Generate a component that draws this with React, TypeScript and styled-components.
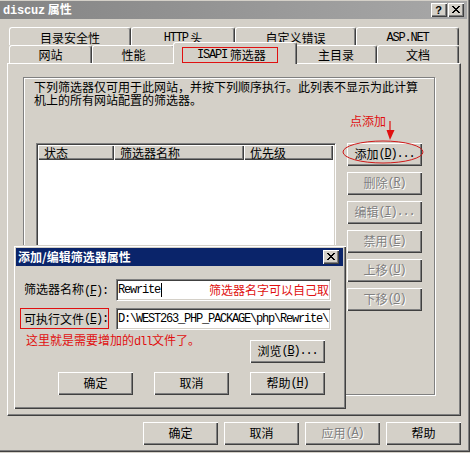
import React from "react";
import styled, { createGlobalStyle, css } from "styled-components";

const GlobalStyle = createGlobalStyle`
  html, body { margin: 0; padding: 0; background: #d4d0c8; }
  body {
    font-family: "Noto Sans CJK SC", "Noto Sans", sans-serif;
    font-size: 12px;
    color: #000;
  }
  * { box-sizing: border-box; }
`;

const Mono = styled.span<{ $bold?: boolean }>`
  font-family: "Liberation Mono", "DejaVu Sans Mono", monospace;
  font-weight: ${(p) => (p.$bold ? 700 : 400)};
  letter-spacing: ${(p) => (p.$bold ? "-0.2px" : "-1.2px")};
`;

const Window = styled.div`
  position: relative;
  width: 470px;
  height: 452px;
  background: #d4d0c8;
  padding: 1px 3px 0 0;
  box-shadow: inset -1px -1px #404040, inset -2px -2px #808080;
  display: flex;
  flex-direction: column;
  overflow: hidden;
`;

const TitleBar = styled.div<{ $active?: boolean }>`
  height: 18px;
  flex: none;
  display: flex;
  align-items: center;
  padding: 0 ${(p) => (p.$active ? 4 : 3)}px 0 ${(p) => (p.$active ? 2 : 3)}px;
  background: ${(p) =>
    p.$active ? "#0a246a" : "linear-gradient(to right, #848484, #a8a8a8)"};
`;

const TitleText = styled.div`
  flex: 1;
  color: #fff;
  font-weight: 700;
  font-size: 12px;
  line-height: 18px;
  white-space: nowrap;
`;

const CaptionButtons = styled.div`
  display: flex;
  gap: 1px;
`;

const CaptionButton = styled.div`
  width: 16px;
  height: 14px;
  background: #d4d0c8;
  box-shadow: inset 1px 1px #fff, inset -1px -1px #404040, inset -2px -2px #808080;
  display: flex;
  align-items: center;
  justify-content: center;
  font: 700 11px "Liberation Sans", sans-serif;
  color: #000;
  padding: 0 1px 1px 0;
`;

const TabControl = styled.div`
  margin: 8px 0 0 7px;
  width: 454px;
  display: flex;
  flex-direction: column;
`;

const TabRow = styled.div`
  display: flex;
  align-items: flex-start;
  padding: 0 2px;
  height: 18px;
`;

const Tab = styled.div<{ $w: number; $selected?: boolean; $top?: boolean }>`
  width: ${(p) => p.$w}px;
  flex: none;
  height: 18px;
  background: #d4d0c8;
  border-top: 1px solid #fff;
  border-left: 1px solid #fff;
  border-right: 1px solid #404040;
  box-shadow: inset -1px 0 #808080;
  border-radius: 3px 3px 0 0;
  display: flex;
  align-items: center;
  justify-content: center;
  line-height: 12px;
  white-space: nowrap;
  padding-top: ${(p) => (p.$top ? 2 : 0)}px;
  ${(p) =>
    p.$selected &&
    css`
      width: ${p.$w + 4}px;
      height: 22px;
      margin: -3px -2px 0;
      z-index: 1;
      align-items: flex-start;
      justify-content: flex-start;
      padding: 4px 0 0 8px;
    `}
`;

const FocusMark = styled.span`
  width: 96px;
  height: 16px;
  border: 1px solid #e01010;
  display: flex;
  align-items: center;
  padding-left: 14px;
  line-height: 12px;
`;

const Panel = styled.div`
  height: 353px;
  background: #d4d0c8;
  border-top: 1px solid #fff;
  border-left: 1px solid #fff;
  border-right: 1px solid #404040;
  border-bottom: 1px solid #404040;
  box-shadow: inset -1px -1px #808080;
  padding: 13px 25px 0 15px;
`;

const GroupBox = styled.div`
  height: 318px;
  border: 1px solid #808080;
  box-shadow: inset 1px 1px #fff, 1px 1px #fff;
  padding: 2px 12px 0 10px;
`;

const Description = styled.p`
  margin: 0;
  line-height: 13px;
  white-space: nowrap;
`;

const ListArea = styled.div`
  display: flex;
  align-items: flex-start;
  margin: 37px 0 0 2px;
`;

const ListView = styled.div`
  width: 300px;
  height: 242px;
  flex: none;
  background: #fff;
  border-top: 1px solid #808080;
  border-left: 1px solid #808080;
  border-right: 1px solid #fff;
  border-bottom: 1px solid #fff;
  box-shadow: inset 1px 1px #404040, inset -1px -1px #d4d0c8;
  padding: 1px;
`;

const ListHeader = styled.div`
  display: flex;
  height: 15px;
`;

const HeaderCell = styled.div<{ $w: number }>`
  width: ${(p) => p.$w}px;
  flex: none;
  background: #d4d0c8;
  box-shadow: inset 1px 1px #fff, inset -1px -1px #404040, inset -2px -2px #808080;
  padding-left: 6px;
  line-height: 15px;
  white-space: nowrap;
`;

const SideButtons = styled.div`
  display: flex;
  flex-direction: column;
  gap: 6px;
  margin-left: 11px;
`;

const Button = styled.button<{ $disabled?: boolean }>`
  width: 75px;
  height: 23px;
  flex: none;
  border: none;
  margin: 0;
  padding: 0 0 1px;
  background: #d4d0c8;
  box-shadow: inset 1px 1px #fff, inset -1px -1px #404040, inset -2px -2px #808080;
  display: flex;
  align-items: center;
  justify-content: center;
  font-family: inherit;
  font-size: 12px;
  line-height: 12px;
  white-space: nowrap;
  color: ${(p) => (p.$disabled ? "#808080" : "#000")};
  text-shadow: ${(p) => (p.$disabled ? "1px 1px 0 #fff" : "none")};
`;

const BottomBar = styled.div`
  display: flex;
  justify-content: flex-end;
  gap: 6px;
  margin-top: 6px;
  padding-right: 6px;
`;

const Dialog = styled.div`
  position: absolute;
  left: 13px;
  top: 245px;
  width: 333px;
  height: 164px;
  background: #d4d0c8;
  padding: 3px;
  box-shadow: inset 1px 1px #d4d0c8, inset 2px 2px #fff, inset -1px -1px #404040,
    inset -2px -2px #808080;
  z-index: 2;
`;

const DialogBody = styled.div`
  padding: 13px 12px 0 8px;
  display: flex;
  flex-direction: column;
`;

const FormRow = styled.div<{ $gap?: number }>`
  display: grid;
  grid-template-columns: 92px 215px;
  align-items: center;
  height: 22px;
  margin-top: ${(p) => p.$gap ?? 0}px;
`;

const FieldLabel = styled.label<{ $boxed?: boolean }>`
  line-height: 12px;
  white-space: nowrap;
  ${(p) =>
    p.$boxed &&
    css`
      align-self: start;
      justify-self: start;
      margin-left: -4px;
      width: 89px;
      height: 21px;
      border: 1px solid #e01010;
      padding-left: 3px;
      display: flex;
      align-items: center;
    `}
`;

const TextBox = styled.div`
  height: 22px;
  background: #fff;
  border-top: 1px solid #808080;
  border-left: 1px solid #808080;
  border-right: 1px solid #fff;
  border-bottom: 1px solid #fff;
  box-shadow: inset 1px 1px #404040, inset -1px -1px #d4d0c8;
  display: flex;
  align-items: center;
  padding: 0 1px 0 1px;
  overflow: hidden;
  white-space: nowrap;
  line-height: 12px;
`;

const Caret = styled.span`
  display: inline-block;
  width: 1px;
  height: 14px;
  background: #000;
  margin-left: 1px;
`;

const RedNote = styled.span<{ $push?: boolean }>`
  color: #e01010;
  line-height: 12px;
  white-space: nowrap;
  margin-left: ${(p) => (p.$push ? "auto" : "2px")};
`;

const NoteRow = styled.div`
  display: flex;
  justify-content: space-between;
  align-items: flex-start;
  padding-right: 6px;
  margin-top: 4px;
`;

const BrowseButton = styled(Button)`
  margin-top: 6px;
`;

const DialogButtons = styled.div`
  display: flex;
  justify-content: flex-end;
  gap: 21px;
  padding-right: 6px;
  margin-top: 9px;
`;

const Annotation = styled.span`
  position: absolute;
  left: 350px;
  top: 115px;
  color: #e01010;
  line-height: 12px;
  white-space: nowrap;
`;

const AnnotationMarks = styled.svg`
  position: absolute;
  left: 340px;
  top: 118px;
  width: 90px;
  height: 50px;
  pointer-events: none;
`;

const CloseGlyph = () => (
  <svg width="8" height="7" viewBox="0 0 8 7" shapeRendering="crispEdges">
    <path
      fill="#000"
      d="M0 0h2v1h-2z M6 0h2v1h-2z M1 1h2v1h-2z M5 1h2v1h-2z M2 2h4v1h-4z M3 3h2v1h-2z M2 4h4v1h-4z M1 5h2v1h-2z M5 5h2v1h-2z M0 6h2v1h-2z M6 6h2v1h-2z"
    />
  </svg>
);

const Mn = ({ k, tail = "" }: { k: string; tail?: string }) => (
  <Mono>
    (<u>{k}</u>){tail}
  </Mono>
);

export default function App() {
  return (
    <>
      <GlobalStyle />
      <Window>
        <TitleBar>
          <TitleText>
            <Mono $bold>discuz</Mono> 属性
          </TitleText>
          <CaptionButtons>
            <CaptionButton>?</CaptionButton>
            <CaptionButton>
              <CloseGlyph />
            </CaptionButton>
          </CaptionButtons>
        </TitleBar>

        <TabControl>
          <TabRow>
            <Tab $w={122} $top>目录安全性</Tab>
            <Tab $w={104} $top>
              <Mono>HTTP</Mono>&nbsp;头
            </Tab>
            <Tab $w={121} $top>自定义错误</Tab>
            <Tab $w={103} $top>
              <Mono>ASP.NET</Mono>
            </Tab>
          </TabRow>
          <TabRow>
            <Tab $w={83}>网站</Tab>
            <Tab $w={83}>性能</Tab>
            <Tab $w={120} $selected>
              <FocusMark>
                <Mono>ISAPI</Mono>&nbsp;筛选器
              </FocusMark>
            </Tab>
            <Tab $w={82}>主目录</Tab>
            <Tab $w={82}>文档</Tab>
          </TabRow>
          <Panel>
            <GroupBox>
              <Description>
                下列筛选器仅可用于此网站，并按下列顺序执行。此列表不显示为此计算
                <br />
                机上的所有网站配置的筛选器。
              </Description>
              <ListArea>
                <ListView>
                  <ListHeader>
                    <HeaderCell $w={76}>状态</HeaderCell>
                    <HeaderCell $w={130}>筛选器名称</HeaderCell>
                    <HeaderCell $w={89}>优先级</HeaderCell>
                  </ListHeader>
                </ListView>
                <SideButtons>
                  <Button>
                    添加<Mn k="D" tail="..." />
                  </Button>
                  <Button $disabled>
                    删除<Mn k="R" />
                  </Button>
                  <Button $disabled>
                    编辑<Mn k="I" tail="..." />
                  </Button>
                  <Button $disabled>
                    禁用<Mn k="E" />
                  </Button>
                  <Button $disabled>
                    上移<Mn k="U" />
                  </Button>
                  <Button $disabled>
                    下移<Mn k="O" />
                  </Button>
                </SideButtons>
              </ListArea>
            </GroupBox>
          </Panel>
        </TabControl>

        <BottomBar>
          <Button>确定</Button>
          <Button>取消</Button>
          <Button $disabled>
            应用<Mn k="A" />
          </Button>
          <Button>帮助</Button>
        </BottomBar>

        <Annotation>点添加</Annotation>
        <AnnotationMarks viewBox="0 0 90 50">
          <line x1="50" y1="3" x2="50" y2="13" stroke="#e01010" strokeWidth="1.2" />
          <polygon points="46.5,12 54.5,12 50,22" fill="#e01010" />
          <ellipse cx="43" cy="34" rx="40" ry="11" fill="none" stroke="#d01818" strokeWidth="1" />
        </AnnotationMarks>

        <Dialog>
          <TitleBar $active>
            <TitleText>添加/编辑筛选器属性</TitleText>
            <CaptionButton>
              <CloseGlyph />
            </CaptionButton>
          </TitleBar>
          <DialogBody>
            <FormRow>
              <FieldLabel>
                筛选器名称<Mono>(<u>F</u>):</Mono>
              </FieldLabel>
              <TextBox>
                <Mono>Rewrite</Mono>
                <Caret />
                <RedNote $push>筛选器名字可以自己取</RedNote>
              </TextBox>
            </FormRow>
            <FormRow $gap={7}>
              <FieldLabel $boxed>
                可执行文件<Mono>(<u>E</u>):</Mono>
              </FieldLabel>
              <TextBox>
                <Mono>D:\WEST263_PHP_PACKAGE\php\Rewrite\</Mono>
              </TextBox>
            </FormRow>
            <NoteRow>
              <RedNote>
                这里就是需要增加的<Mono>dll</Mono>文件了。
              </RedNote>
              <BrowseButton>
                浏览<Mn k="B" tail="..." />
              </BrowseButton>
            </NoteRow>
            <DialogButtons>
              <Button>确定</Button>
              <Button>取消</Button>
              <Button>
                帮助<Mn k="H" />
              </Button>
            </DialogButtons>
          </DialogBody>
        </Dialog>
      </Window>
    </>
  );
}
